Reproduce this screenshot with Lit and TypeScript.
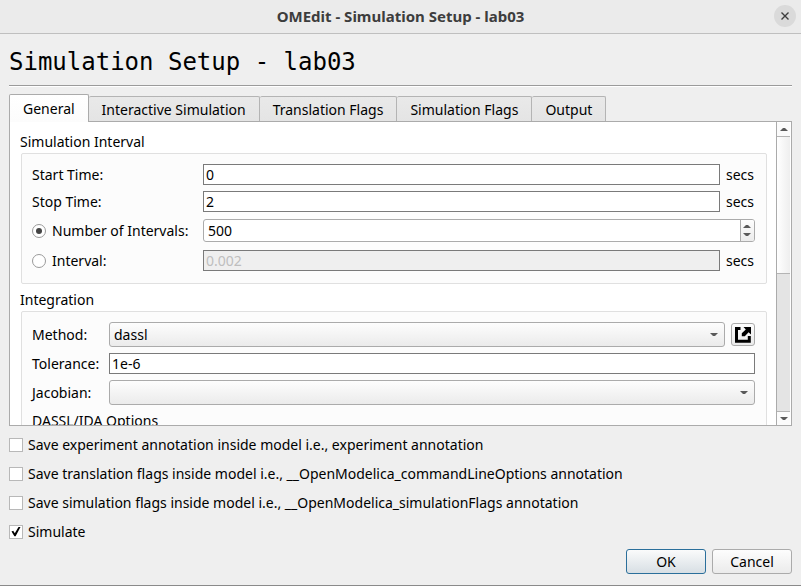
import { LitElement, html, css, svg } from "lit";
import { customElement, state } from "lit/decorators.js";
import { classMap } from "lit/directives/class-map.js";

const TABS = ["General", "Interactive Simulation", "Translation Flags", "Simulation Flags", "Output"];

const OPTIONS = [
  { id: "experiment", label: "Save experiment annotation inside model i.e., experiment annotation", checked: false },
  { id: "translation", label: "Save translation flags inside model i.e., __OpenModelica_commandLineOptions annotation", checked: false },
  { id: "simulation", label: "Save simulation flags inside model i.e., __OpenModelica_simulationFlags annotation", checked: false },
  { id: "simulate", label: "Simulate", checked: true },
];

const up = svg`<path d="M0 4 L3 1 H5 L8 4 Z"/>`;
const down = svg`<path d="M0 1 L3 4 H5 L8 1 Z"/>`;
const arrow = (shape: unknown) =>
  html`<svg class="arrow" width="8" height="5" viewBox="0 0 8 5" aria-hidden="true">${shape}</svg>`;

@customElement("app-root")
export class AppRoot extends LitElement {
  static styles = css`
    :host {
      display: flex;
      flex-direction: column;
      height: 100vh;
      box-sizing: border-box;
      border-bottom: 1px solid #8a8a8a;
      background: #efefef;
      color: #000;
      font: 14px/22px "Noto Sans", sans-serif;
      white-space: nowrap;
    }
    * { box-sizing: border-box; }
    button, input, select { font: inherit; color: inherit; margin: 0; }
    .titlebar {
      display: grid;
      grid-template-columns: 1fr auto 1fr;
      align-items: center;
      height: 34px;
      padding: 0 5px 2px;
      background: #ebebeb;
      border-bottom: 1px solid #bfbfbf;
      flex: none;
    }
    .caption {
      grid-column: 2;
      font-size: 15px;
      font-weight: 700;
      color: #3d3d3d;
    }
    .close {
      justify-self: end;
      width: 22px;
      height: 22px;
      padding: 0;
      border: 0;
      border-radius: 50%;
      background: #dadada;
      display: grid;
      place-items: center;
    }
    .close svg { stroke: #3d3d3d; stroke-width: 1.4; }
    .content {
      flex: 1;
      min-height: 0;
      display: flex;
      flex-direction: column;
      padding: 0 9px 11px;
    }
    h1 {
      margin: 0;
      padding: 13px 0 8px;
      font: 24px/30px "DejaVu Sans Mono", monospace;
      border-bottom: 1px solid #9b9b9b;
      box-shadow: 0 1px #fff;
    }
    .tabs {
      display: flex;
      align-items: flex-end;
      margin-top: 8px;
    }
    .tab {
      height: 26px;
      margin: 0;
      padding: 0 13px;
      border: 1px solid #b4b4b4;
      border-left-width: 0;
      border-bottom: 0;
      border-radius: 2px 2px 0 0;
      background: linear-gradient(#e9e9e9, #e4e4e4);
    }
    .tab.active {
      height: 28px;
      border-left-width: 1px;
      border-color: #ababab;
      background: linear-gradient(#fff, #fcfcfc);
      position: relative;
      z-index: 1;
    }
    .panel {
      flex: 1;
      min-height: 0;
      display: flex;
      margin-top: -1px;
      border: 1px solid #ababab;
      background: #fff;
    }
    .view {
      flex: 1;
      min-width: 0;
      overflow: hidden;
      padding: 9px 9px 0 11px;
    }
    .group { margin-bottom: 5px; }
    .title { display: block; margin-left: -1px; }
    .box {
      display: grid;
      gap: 6px;
      align-items: center;
      padding: 10px 11px 11px 10px;
      border: 1px solid #e0e0e0;
      border-radius: 2px;
      background: #fcfcfc;
    }
    .interval { grid-template-columns: 165px minmax(0, 1fr) 29px; }
    .integration { grid-template-columns: 71px minmax(0, 1fr) 24px; }
    .text {
      width: 100%;
      height: 21px;
      padding: 0 2px;
      border: 1px solid #7a7a7a;
      background: #fff;
      outline: 0;
    }
    .text:disabled { background: #efefef; color: #bebebe; }
    .wide { grid-column: span 2; }
    .label { line-height: 21px; }
    .choice { display: flex; align-items: center; line-height: 23px; }
    .spin {
      display: flex;
      height: 23px;
      margin: 1px 0;
      border: 1px solid #ababab;
      border-radius: 3px;
      background: #fff;
      overflow: hidden;
    }
    .spin input {
      flex: 1;
      min-width: 0;
      border: 0;
      padding: 0 4px;
      background: none;
      outline: 0;
      appearance: textfield;
    }
    .spin input::-webkit-inner-spin-button { appearance: none; }
    .steps {
      display: flex;
      flex-direction: column;
      width: 14px;
      padding: 2px 1px 2px 0;
      border-left: 1px solid #ababab;
      background: linear-gradient(#fefefe, #ececec);
    }
    .steps button, .scroll button {
      display: grid;
      place-items: center;
      padding: 0;
      border: 0;
      background: none;
    }
    .steps button { flex: 1; }
    .arrow { display: block; fill: #5a5a5a; }
    .combo { position: relative; }
    .combo select {
      display: block;
      width: 100%;
      height: 25px;
      padding: 0 4px;
      border: 1px solid #ababab;
      border-radius: 3px;
      background: linear-gradient(#fdfdfd, #ebebeb);
      appearance: none;
      outline: 0;
    }
    .combo .arrow { position: absolute; right: 7px; top: 10px; pointer-events: none; }
    .tool {
      display: grid;
      place-items: center;
      width: 24px;
      height: 23px;
      padding: 0;
      border: 1px solid #ababab;
      border-radius: 3px;
      background: linear-gradient(#fdfdfd, #ebebeb);
    }
    .nested { grid-column: 1 / -1; line-height: 20px; }
    .scroll {
      display: flex;
      flex-direction: column;
      width: 15px;
      padding: 1px 1px 0 0;
      border-left: 1px solid #ababab;
      background: #fff;
    }
    .scroll button { height: 14px; background: #fbfbfb; }
    .scroll .first { border-bottom: 1px solid #b4b4b4; }
    .scroll .last { border-top: 1px solid #b4b4b4; }
    .track { flex: 1; background: #e4e4e4; }
    .thumb {
      height: 50%;
      border-bottom: 1px solid #b4b4b4;
      background: linear-gradient(90deg, #fff, #eee);
    }
    .options {
      display: grid;
      gap: 6px;
      justify-items: start;
      padding: 7px 0 6px;
    }
    input[type="checkbox"], input[type="radio"] {
      appearance: none;
      flex: none;
      display: grid;
      place-items: center;
      width: 14px;
      height: 14px;
      border: 1px solid #b8b8b8;
      background: #fff;
      margin-right: 5px;
    }
    input[type="radio"] { border-radius: 50%; border-color: #9a9a9a; margin-right: 6px; }
    input[type="radio"]:checked::before {
      content: "";
      width: 6px;
      height: 6px;
      border-radius: 50%;
      background: #444;
    }
    input[type="checkbox"]:checked::before {
      content: "";
      width: 10px;
      height: 10px;
      background: #000;
      clip-path: polygon(5% 50%, 22% 42%, 38% 68%, 75% 4%, 95% 4%, 46% 98%, 34% 98%);
    }
    .actions { display: flex; justify-content: flex-end; gap: 6px; }
    .push {
      width: 80px;
      height: 25px;
      padding: 0;
      border: 1px solid #ababab;
      border-radius: 3px;
      background: linear-gradient(#fdfdfd, #ebebeb);
    }
    .push.default {
      border-color: #2b6f9b;
      background: linear-gradient(#fafbfb, #d8dfe4);
    }
  `;

  @state() private tab = 0;
  @state() private mode: "count" | "step" = "count";

  render() {
    return html`
      <header class="titlebar">
        <span class="caption">OMEdit - Simulation Setup - lab03</span>
        <button class="close" aria-label="Close">
          <svg width="8" height="8" viewBox="0 0 8 8" aria-hidden="true"><path d="M0.5 0.5 L7.5 7.5 M7.5 0.5 L0.5 7.5"/></svg>
        </button>
      </header>
      <main class="content">
        <h1>Simulation Setup - lab03</h1>
        <div class="tabs" role="tablist">
          ${TABS.map(
            (name, i) => html`<button
              role="tab"
              class=${classMap({ tab: true, active: i === this.tab })}
              aria-selected=${i === this.tab}
              @click=${() => (this.tab = i)}
            >${name}</button>`,
          )}
        </div>
        <div class="panel" role="tabpanel">
          <div class="view">${this.renderInterval()}${this.renderIntegration()}</div>
          <div class="scroll">
            <button class="first" aria-label="Scroll up">${arrow(up)}</button>
            <div class="track"><div class="thumb"></div></div>
            <button class="last" aria-label="Scroll down">${arrow(down)}</button>
          </div>
        </div>
        <div class="options">
          ${OPTIONS.map(
            (o) => html`<label class="choice" for=${o.id}>
              <input type="checkbox" id=${o.id} .checked=${o.checked} />${o.label}
            </label>`,
          )}
        </div>
        <footer class="actions">
          <button class="push default">OK</button>
          <button class="push">Cancel</button>
        </footer>
      </main>
    `;
  }

  private renderInterval() {
    return html`
      <section class="group">
        <span class="title">Simulation Interval</span>
        <div class="box interval">
          <label class="label" for="start">Start Time:</label>
          <input class="text" id="start" value="0" />
          <span class="label">secs</span>
          <label class="label" for="stop">Stop Time:</label>
          <input class="text" id="stop" value="2" />
          <span class="label">secs</span>
          <label class="choice">
            <input type="radio" name="mode" .checked=${this.mode === "count"} @change=${() => (this.mode = "count")} />Number of Intervals:
          </label>
          <div class="spin wide">
            <input type="number" value="500" aria-label="Number of Intervals" ?disabled=${this.mode !== "count"} />
            <div class="steps">
              <button aria-label="Increase">${arrow(up)}</button>
              <button aria-label="Decrease">${arrow(down)}</button>
            </div>
          </div>
          <label class="choice">
            <input type="radio" name="mode" .checked=${this.mode === "step"} @change=${() => (this.mode = "step")} />Interval:
          </label>
          <input class="text" value="0.002" aria-label="Interval" ?disabled=${this.mode !== "step"} />
          <span class="label">secs</span>
        </div>
      </section>
    `;
  }

  private renderIntegration() {
    return html`
      <section class="group">
        <span class="title">Integration</span>
        <div class="box integration">
          <label class="label" for="method">Method:</label>
          <div class="combo">
            <select id="method"><option>dassl</option></select>
            ${arrow(down)}
          </div>
          <button class="tool" aria-label="Method help">
            <svg width="16" height="16" viewBox="0 0 16 16" aria-hidden="true">
              <path d="M5.5 1.5 H1.5 V14.3 H14.3 V9" fill="none" stroke="#000" stroke-width="3"/>
              <path d="M8.5 0 H16 V7.5 L13.6 5.2 L9.8 9.2 H6.8 V6.2 L10.8 2.4 Z"/>
            </svg>
          </button>
          <label class="label" for="tolerance">Tolerance:</label>
          <input class="text wide" id="tolerance" value="1e-6" />
          <label class="label" for="jacobian">Jacobian:</label>
          <div class="combo wide">
            <select id="jacobian"><option></option></select>
            ${arrow(down)}
          </div>
          <span class="nested">DASSL/IDA Options</span>
        </div>
      </section>
    `;
  }
}
